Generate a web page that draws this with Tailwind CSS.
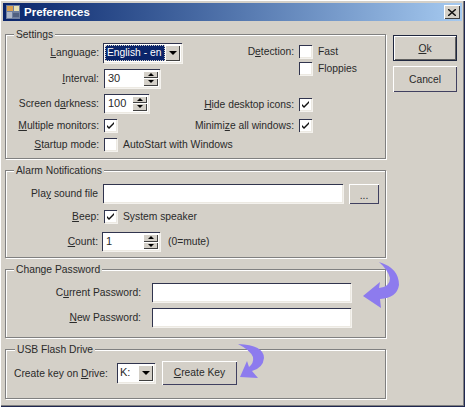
<!DOCTYPE html>
<html lang="en">
<head>
  <meta charset="UTF-8" />
  <title>Preferences</title>
  <script src="https://cdn.jsdelivr.net/npm/@tailwindcss/browser@4"></script>
</head>
<body class="bg-[#d4d0c8] font-['Liberation_Sans',sans-serif] text-[10.3px] leading-[13px] text-[#2a2a2a]">
<div class="relative w-[465px] h-[407px] overflow-hidden p-[3px] shadow-[inset_1px_1px_0_#ffffff,inset_-1px_-1px_0_#202850,inset_-2px_-2px_0_#808080]">

  <!-- Title bar -->
  <div class="h-[18px] flex items-center pl-[2px] pr-[2px] bg-gradient-to-r from-[#0a246a] to-[#a6caf0]">
    <svg width="16" height="16" viewBox="0 0 16 16">
      <rect x="1" y="1" width="14" height="14" fill="#6f7f9f"/>
      <rect x="2" y="2" width="6" height="5" fill="#d8a050"/>
      <rect x="9" y="2" width="5" height="5" fill="#e8e0b0"/>
      <rect x="2" y="8" width="5" height="6" fill="#b0b8c8"/>
      <rect x="8" y="9" width="6" height="4" fill="#506080"/>
    </svg>
    <span class="ml-[3px] text-white font-bold text-[11.5px]">Preferences</span>
    <button class="ml-auto w-[16px] h-[14px] flex items-center justify-center bg-[#d4d0c8] shadow-[inset_1px_1px_0_#ffffff,inset_-1px_-1px_0_#404040]">
      <svg width="8" height="7" viewBox="0 0 8 7"><path d="M0 0l8 7M8 0L0 7" stroke="#111" stroke-width="1.4"/></svg>
    </button>
  </div>

  <div class="flex mt-[6px]">
    <div class="w-[381px] ml-[2px] mt-[7px] flex flex-col gap-[11px]">

      <!-- Settings -->
      <div class="relative h-[125px] border border-[#808080] shadow-[1px_1px_0_#ffffff,inset_1px_1px_0_#ffffff] flex">
        <span class="absolute left-[8px] -top-[7px] px-[2px] bg-[#d4d0c8]">Settings</span>
        <div class="w-[220px] shrink-0 flex flex-col pt-[8px]">
          <div class="h-[19px] flex items-center">
            <span class="w-[93px] shrink-0 text-right"><u>L</u>anguage:</span>
            <div class="ml-[4px] w-[79px] h-[20px] p-[2px] flex bg-white shadow-[inset_1px_1px_0_#30344e,inset_-1px_-1px_0_#ece9e2,1px_1px_0_#f4f2ee]">
              <span class="flex-1 bg-[#0a246a] text-white pl-[1px] leading-[14px] whitespace-nowrap border border-dotted border-[#d4d0c8]">English - en</span>
              <span class="w-[15px] flex items-center justify-center bg-[#d4d0c8] shadow-[inset_1px_1px_0_#ffffff,inset_-1px_-1px_0_#404040]"><span class="border-x-[4px] border-t-[4px] border-x-transparent border-t-black"></span></span>
            </div>
          </div>
          <div class="h-[18px] mt-[7px] flex items-center">
            <span class="w-[93px] shrink-0 text-right"><u>I</u>nterval:</span>
            <div class="ml-[5px] w-[56px] h-[19px] p-[2px] flex bg-white shadow-[inset_1px_1px_0_#30344e,inset_-1px_-1px_0_#ece9e2,1px_1px_0_#f4f2ee]">
              <span class="flex-1 pl-[2px] leading-[15px] text-[11px]">30</span>
              <span class="w-[15px] flex flex-col">
                <span class="flex-1 flex items-center justify-center bg-[#d4d0c8] shadow-[inset_1px_1px_0_#ffffff,inset_-1px_-1px_0_#404040]"><span class="border-x-[3px] border-b-[3px] border-x-transparent border-b-black"></span></span>
                <span class="flex-1 flex items-center justify-center bg-[#d4d0c8] shadow-[inset_1px_1px_0_#ffffff,inset_-1px_-1px_0_#404040]"><span class="border-x-[3px] border-t-[3px] border-x-transparent border-t-black"></span></span>
              </span>
            </div>
          </div>
          <div class="h-[18px] mt-[7px] flex items-center">
            <span class="w-[93px] shrink-0 text-right">Screen d<u>a</u>rkness:</span>
            <div class="ml-[5px] w-[45px] h-[19px] p-[2px] flex bg-white shadow-[inset_1px_1px_0_#30344e,inset_-1px_-1px_0_#ece9e2,1px_1px_0_#f4f2ee]">
              <span class="flex-1 pl-[2px] leading-[15px] text-[11px]">100</span>
              <span class="w-[15px] flex flex-col">
                <span class="flex-1 flex items-center justify-center bg-[#d4d0c8] shadow-[inset_1px_1px_0_#ffffff,inset_-1px_-1px_0_#404040]"><span class="border-x-[3px] border-b-[3px] border-x-transparent border-b-black"></span></span>
                <span class="flex-1 flex items-center justify-center bg-[#d4d0c8] shadow-[inset_1px_1px_0_#ffffff,inset_-1px_-1px_0_#404040]"><span class="border-x-[3px] border-t-[3px] border-x-transparent border-t-black"></span></span>
              </span>
            </div>
          </div>
          <div class="h-[13px] mt-[7px] flex items-center">
            <span class="w-[93px] shrink-0 text-right"><u>M</u>ultiple monitors:</span>
            <span class="ml-[5px] w-[13px] h-[13px] bg-white shadow-[inset_1px_1px_0_#30344e,inset_-1px_-1px_0_#ece9e2,1px_1px_0_#f4f2ee]"><svg width="13" height="13" viewBox="0 0 13 13"><path d="M3 6l2 2 5-5v2l-5 5-2-2z" fill="#111"/></svg></span>
          </div>
          <div class="h-[13px] mt-[6px] flex items-center whitespace-nowrap">
            <span class="w-[93px] shrink-0 text-right"><u>S</u>tartup mode:</span>
            <span class="ml-[5px] w-[13px] h-[13px] shrink-0 bg-white shadow-[inset_1px_1px_0_#30344e,inset_-1px_-1px_0_#ece9e2,1px_1px_0_#f4f2ee]"></span>
            <span class="ml-[6px] text-[10.4px]">AutoStart with Windows</span>
          </div>
        </div>
        <div class="flex-1 min-w-0 flex flex-col pt-[10px]">
          <div class="h-[13px] flex items-center">
            <span class="w-[68px] text-right">D<u>e</u>tection:</span>
            <span class="ml-[5px] w-[13px] h-[13px] bg-white shadow-[inset_1px_1px_0_#30344e,inset_-1px_-1px_0_#ece9e2,1px_1px_0_#f4f2ee]"></span>
            <span class="ml-[6px]">Fast</span>
          </div>
          <div class="h-[13px] mt-[4px] pl-[73px] flex items-center">
            <span class="w-[13px] h-[13px] bg-white shadow-[inset_1px_1px_0_#30344e,inset_-1px_-1px_0_#ece9e2,1px_1px_0_#f4f2ee]"></span>
            <span class="ml-[6px]">Floppies</span>
          </div>
          <div class="w-[86px] h-[13px] mt-[23px] flex items-center justify-end whitespace-nowrap">
            <span class="shrink-0"><u>H</u>ide desktop icons:</span>
            <span class="ml-[5px] w-[13px] h-[13px] shrink-0 bg-white shadow-[inset_1px_1px_0_#30344e,inset_-1px_-1px_0_#ece9e2,1px_1px_0_#f4f2ee]"><svg width="13" height="13" viewBox="0 0 13 13"><path d="M3 6l2 2 5-5v2l-5 5-2-2z" fill="#111"/></svg></span>
          </div>
          <div class="w-[86px] h-[13px] mt-[8px] flex items-center justify-end whitespace-nowrap">
            <span class="shrink-0">Minimi<u>z</u>e all windows:</span>
            <span class="ml-[5px] w-[13px] h-[13px] shrink-0 bg-white shadow-[inset_1px_1px_0_#30344e,inset_-1px_-1px_0_#ece9e2,1px_1px_0_#f4f2ee]"><svg width="13" height="13" viewBox="0 0 13 13"><path d="M3 6l2 2 5-5v2l-5 5-2-2z" fill="#111"/></svg></span>
          </div>
        </div>
      </div>

      <!-- Alarm Notifications -->
      <div class="relative h-[88px] border border-[#808080] shadow-[1px_1px_0_#ffffff,inset_1px_1px_0_#ffffff] flex flex-col pt-[13px]">
        <span class="absolute left-[8px] -top-[7px] px-[2px] bg-[#d4d0c8]">Alarm Notifications</span>
        <div class="h-[19px] flex items-center">
          <span class="w-[92px] text-right">Pla<u>y</u> sound file</span>
          <span class="ml-[5px] w-[240px] h-[19px] bg-white shadow-[inset_1px_1px_0_#30344e,inset_-1px_-1px_0_#ece9e2,1px_1px_0_#f4f2ee]"></span>
          <span class="ml-[6px] w-[30px] h-[20px] text-center leading-[24px] bg-[#d4d0c8] shadow-[inset_1px_1px_0_#ffffff,inset_-1px_-1px_0_#404060]">...</span>
        </div>
        <div class="h-[13px] mt-[7px] flex items-center">
          <span class="w-[93px] text-right"><u>B</u>eep:</span>
          <span class="ml-[5px] w-[13px] h-[13px] bg-white shadow-[inset_1px_1px_0_#30344e,inset_-1px_-1px_0_#ece9e2,1px_1px_0_#f4f2ee]"><svg width="13" height="13" viewBox="0 0 13 13"><path d="M3 6l2 2 5-5v2l-5 5-2-2z" fill="#111"/></svg></span>
          <span class="ml-[6px]">System speaker</span>
        </div>
        <div class="h-[19px] mt-[9px] flex items-center">
          <span class="w-[92px] text-right"><u>C</u>ount:</span>
          <div class="ml-[4px] w-[58px] h-[19px] p-[2px] flex bg-white shadow-[inset_1px_1px_0_#30344e,inset_-1px_-1px_0_#ece9e2,1px_1px_0_#f4f2ee]">
            <span class="flex-1 pl-[2px] leading-[15px] text-[11px]">1</span>
            <span class="w-[15px] flex flex-col">
              <span class="flex-1 flex items-center justify-center bg-[#d4d0c8] shadow-[inset_1px_1px_0_#ffffff,inset_-1px_-1px_0_#404040]"><span class="border-x-[3px] border-b-[3px] border-x-transparent border-b-black"></span></span>
              <span class="flex-1 flex items-center justify-center bg-[#d4d0c8] shadow-[inset_1px_1px_0_#ffffff,inset_-1px_-1px_0_#404040]"><span class="border-x-[3px] border-t-[3px] border-x-transparent border-t-black"></span></span>
            </span>
          </div>
          <span class="ml-[8px]">(0=mute)</span>
        </div>
      </div>

      <!-- Change Password -->
      <div class="relative h-[69px] border border-[#808080] shadow-[1px_1px_0_#ffffff,inset_1px_1px_0_#ffffff] flex flex-col pt-[13px]">
        <span class="absolute left-[8px] -top-[7px] px-[2px] bg-[#d4d0c8]">Change Password</span>
        <div class="h-[19px] flex items-center">
          <span class="w-[135px] text-right">C<u>u</u>rrent Password:</span>
          <span class="ml-[11px] w-[199px] h-[19px] bg-white shadow-[inset_1px_1px_0_#30344e,inset_-1px_-1px_0_#ece9e2,1px_1px_0_#f4f2ee]"></span>
        </div>
        <div class="h-[19px] mt-[6px] flex items-center">
          <span class="w-[135px] text-right"><u>N</u>ew Password:</span>
          <span class="ml-[11px] w-[199px] h-[19px] bg-white shadow-[inset_1px_1px_0_#30344e,inset_-1px_-1px_0_#ece9e2,1px_1px_0_#f4f2ee]"></span>
        </div>
      </div>

      <!-- USB Flash Drive -->
      <div class="relative h-[50px] border border-[#808080] shadow-[1px_1px_0_#ffffff,inset_1px_1px_0_#ffffff] flex items-center pl-[8px] pb-[2px]">
        <span class="absolute left-[9px] -top-[7px] px-[2px] bg-[#d4d0c8]">USB Flash Drive</span>
        <span class="w-[95px] shrink-0 whitespace-nowrap">Create key on <u>D</u>rive:</span>
        <div class="ml-[8px] w-[38px] h-[20px] p-[2px] flex bg-white shadow-[inset_1px_1px_0_#30344e,inset_-1px_-1px_0_#ece9e2,1px_1px_0_#f4f2ee]">
          <span class="flex-1 pl-[1px] leading-[15px] text-[11px]">K:</span>
          <span class="w-[15px] flex items-center justify-center bg-[#d4d0c8] shadow-[inset_1px_1px_0_#ffffff,inset_-1px_-1px_0_#404040]"><span class="border-x-[4px] border-t-[4px] border-x-transparent border-t-black"></span></span>
        </div>
        <span class="ml-[7px] w-[75px] h-[24px] text-center leading-[24px] bg-[#d4d0c8] shadow-[inset_1px_1px_0_#ffffff,inset_-1px_-1px_0_#404060]"><u>C</u>reate Key</span>
      </div>
    </div>

    <!-- Ok / Cancel -->
    <div class="ml-[7px] mt-[8px] flex flex-col gap-[5px]">
      <button class="w-[64px] h-[26px] border border-[#202840] shadow-[inset_1px_1px_0_#ffffff,inset_-1px_-1px_0_#606060]"><u>O</u>k</button>
      <button class="w-[64px] h-[26px] shadow-[inset_1px_1px_0_#ffffff,inset_-1px_-1px_0_#404060]">Cancel</button>
    </div>
  </div>

  <!-- Hint arrows over the dialog -->
  <svg class="absolute left-0 top-0 pointer-events-none" width="465" height="407" viewBox="0 0 465 407">
    <path d="M379 262Q399 268 399 285Q397 298 380 299L381 308L363 296L380 282L379 288Q390 287 390 278Q388 270 379 262Z" fill="#8d7bee"/>
    <path d="M238 344Q264 345 264 358Q263 368 252 371L258 378L240 377L247 361L249 367Q254 363 253 357Q250 350 238 344Z" fill="#8d7bee"/>
  </svg>
</div>
</body>
</html>
